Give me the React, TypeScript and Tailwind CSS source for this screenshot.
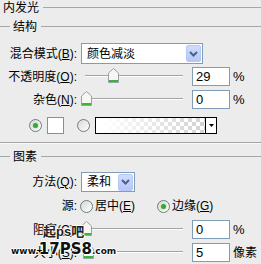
import React from 'react';

const Label = ({ text, k }: { text: string; k: string }) => (
  <span className="w-[77px] shrink-0 text-right whitespace-nowrap">
    {text}(<span className="underline underline-offset-1">{k}</span>):
  </span>
);

const Chevron = () => (
  <svg width="9" height="6" viewBox="0 0 9 6">
    <path d="M1 1 L4.5 4.5 L8 1" fill="none" stroke="#4d6185" strokeWidth="2" />
  </svg>
);

const SelectBtn = () => (
  <span className="mr-px flex h-[17px] w-[15px] items-center justify-center rounded-[2px] border border-[#b6c9f6] bg-[linear-gradient(#cfdcfd,#b4c7f8)]">
    <Chevron />
  </span>
);

const Thumb = () => (
  <svg width="11" height="15" viewBox="0 0 11 15">
    <path d="M5.5 0.5 L10.5 5 V14.5 H0.5 V5 Z" fill="#f6f6f2" stroke="#94a2ab" />
    <path d="M1 13 H10" stroke="#3cb43c" strokeWidth="2" />
  </svg>
);

const Slider = ({ value }: { value: number }) => (
  <div className="relative ml-[4px] h-[19px] w-[105px]">
    <div className="absolute left-[4px] right-[3px] top-[8px] h-[2px] border-t border-b border-t-[#a3a3a3] border-b-white" />
    <div className="absolute top-[1px]" style={{ left: Math.round(value * 92) }}>
      <Thumb />
    </div>
  </div>
);

const NumBox = ({ v }: { v: string }) => (
  <div className="ml-[6px] flex h-[19px] w-[38px] items-center border border-[#7f9db9] bg-white pl-[3px] text-[13px]">
    {v}
  </div>
);

const Radio = ({ on }: { on?: boolean }) => (
  <span className="flex h-[13px] w-[13px] shrink-0 items-center justify-center rounded-full border border-[#6d7c88] bg-[linear-gradient(135deg,#d8d8d2,#ffffff)]">
    {on && <span className="h-[5px] w-[5px] rounded-full bg-[#35a835] shadow-[0_0_2px_#8fd88f]" />}
  </span>
);

const Legend = ({ title, lead }: { title: string; lead?: boolean }) => (
  <div className="flex h-[15px] items-center">
    {lead && <div className="h-px w-[10px] bg-[#a6a6a6]" />}
    <span className="ml-[3px]">{title}</span>
    <div className="ml-[4px] h-px flex-1 bg-[#a6a6a6]" />
  </div>
);

export default function App() {
  return (
    <div className="relative h-[264px] w-[261px] overflow-hidden bg-[#ececec] text-[12px] leading-none text-black font-['Liberation_Sans','Noto_Sans_CJK_SC',sans-serif]">
      <div className="flex flex-col">
        <Legend title="内发光" />
        <div className="mt-[4px]">
          <Legend title="结构" lead />
        </div>

        <div className="mt-[9px] flex h-[21px] items-center">
          <Label text="混合模式" k="B" />
          <div className="ml-[4px] flex h-[21px] w-[122px] items-center border border-[#7f9db9] bg-white">
            <span className="flex-1 pl-[5px]">颜色减淡</span>
            <SelectBtn />
          </div>
        </div>

        <div className="mt-[3px] flex h-[19px] items-center">
          <Label text="不透明度" k="O" />
          <Slider value={0.29} />
          <NumBox v="29" />
          <span className="ml-[3px] text-[13px]">%</span>
        </div>

        <div className="mt-[4px] flex h-[19px] items-center">
          <Label text="杂色" k="N" />
          <Slider value={0} />
          <NumBox v="0" />
          <span className="ml-[3px] text-[13px]">%</span>
        </div>

        <div className="mt-[8px] flex h-[17px] items-center pl-[29px]">
          <Radio on />
          <div className="ml-[5px] h-[17px] w-[17px] border border-[#8d8d8d] bg-white" />
          <span className="ml-[13px]">
            <Radio />
          </span>
          <div className="ml-[5px] flex h-[17px] w-[122px] border border-black bg-[repeating-conic-gradient(#d2d2d2_0%_25%,#ffffff_0%_50%)] bg-[length:8px_8px]">
            <div className="flex-1 bg-[linear-gradient(to_right,#ffffff_5%,rgba(255,255,255,0))]" />
            <div className="flex w-[11px] items-center justify-center border-l border-black bg-white">
              <svg width="5" height="3" viewBox="0 0 5 3">
                <path d="M0 0 H5 L2.5 3 Z" fill="#000" />
              </svg>
            </div>
          </div>
        </div>

        <div className="mt-[8px] h-[2px] border-t border-b border-t-[#a6a6a6] border-b-[#f8f8f8]" />

        <div className="mt-[5px]">
          <Legend title="图素" lead />
        </div>

        <div className="mt-[8px] flex h-[20px] items-center">
          <Label text="方法" k="Q" />
          <div className="ml-[4px] flex h-[20px] w-[54px] items-center border border-[#7f9db9] bg-white">
            <span className="flex-1 pl-[5px]">柔和</span>
            <SelectBtn />
          </div>
        </div>

        <div className="mt-[6px] flex h-[16px] items-center">
          <span className="w-[77px] shrink-0 text-right">源:</span>
          <div className="ml-[3px] flex w-[77px] items-center">
            <Radio />
            <span className="ml-[2px]">
              居中(<span className="underline underline-offset-1">E</span>)
            </span>
          </div>
          <Radio on />
          <span className="ml-[2px]">
            边缘(<span className="underline underline-offset-1">G</span>)
          </span>
        </div>

        <div className="mt-[6px] flex h-[19px] items-center">
          <Label text="阻塞" k="C" />
          <Slider value={0} />
          <NumBox v="0" />
          <span className="ml-[3px] text-[13px]">%</span>
        </div>

        <div className="mt-[4px] flex h-[19px] items-center">
          <Label text="大小" k="S" />
          <Slider value={0.02} />
          <NumBox v="5" />
          <span className="ml-[3px]">像素</span>
        </div>
      </div>

      {/* watermark over the panel */}
      <div className="absolute left-[43px] top-[225px] text-[13px] font-bold text-[#222] [text-shadow:1px_0_#fff,-1px_0_#fff,0_1px_#fff,0_-1px_#fff]">
        起ps吧
      </div>
      <div className="absolute left-[11px] top-[242px] flex items-end font-bold text-[#111] font-['DejaVu_Sans',sans-serif] [text-shadow:1px_0_#fff,-1px_0_#fff,0_1px_#fff,0_-1px_#fff,1px_1px_#fff]">
        <span className="mb-px text-[9px] leading-none">www.</span>
        <span className="text-[15px] leading-none">17PS8</span>
        <span className="mb-px text-[9px] leading-none">.com</span>
      </div>
    </div>
  );
}
